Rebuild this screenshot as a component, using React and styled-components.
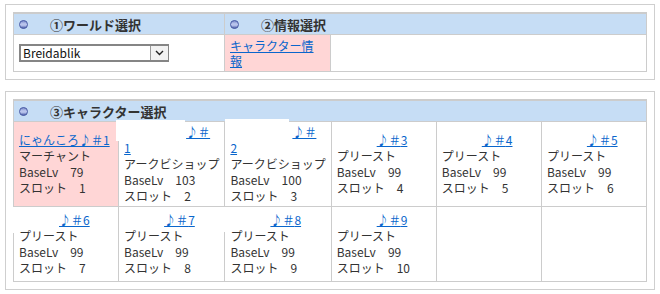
import React from "react";
import styled, { createGlobalStyle } from "styled-components";

const GlobalStyle = createGlobalStyle`
  body {
    margin: 0;
    background: #ffffff;
    font-family: "Noto Sans CJK JP", "Noto Sans", sans-serif;
    font-size: 12px;
    color: #333333;
  }
`;

const characters = [
  { label: "にゃんころ♪＃1", job: "マーチャント", lv: 79, slot: 1, active: true },
  { pad: 62, num: 1, wrap: true, job: "アークビショップ", lv: 103, slot: 2, cover: { l: -3, t: -2, w: 69, h: 21 } },
  { pad: 62, num: 2, wrap: true, job: "アークビショップ", lv: 100, slot: 3, cover: { l: 0, t: -3, w: 64, h: 21 } },
  { pad: 40, num: 3, job: "プリースト", lv: 99, slot: 4 },
  { pad: 40, num: 4, job: "プリースト", lv: 99, slot: 5 },
  { pad: 40, num: 5, job: "プリースト", lv: 99, slot: 6 },
  { pad: 40, num: 6, job: "プリースト", lv: 99, slot: 7, cover: { l: -1, t: 0, w: 2, h: 26 } },
  { pad: 40, num: 7, job: "プリースト", lv: 99, slot: 8 },
  { pad: 40, num: 8, job: "プリースト", lv: 99, slot: 9, cover: { l: -1, t: 0, w: 2, h: 25 } },
  { pad: 40, num: 9, job: "プリースト", lv: 99, slot: 10 },
];

const Bullet = () => (
  <svg width="9" height="9" viewBox="0 0 9 9">
    <defs>
      <linearGradient id="ball" x1="0" y1="0" x2="0" y2="1">
        <stop offset="0" stopColor="#6f80c4" />
        <stop offset="0.4" stopColor="#b9c4ec" />
        <stop offset="0.6" stopColor="#b9c4ec" />
        <stop offset="1" stopColor="#3d4f9e" />
      </linearGradient>
    </defs>
    <circle cx="4.5" cy="4.5" r="4" fill="url(#ball)" stroke="#4a5ca6" strokeWidth="1" />
  </svg>
);

const App = () => (
  <Page>
    <GlobalStyle />
    <Panel>
      <Table>
        <Head $span={2}>
          <Bullet />
          ①ワールド選択
        </Head>
        <Head $span={4}>
          <Bullet />
          ②情報選択
        </Head>
        <WorldCell>
          <SelectBox>
            <Select defaultValue="Breidablik">
              <option>Breidablik</option>
            </Select>
            <DropButton>
              <svg width="9" height="6" viewBox="0 0 9 6">
                <polyline points="1,1 4.5,4.5 8,1" fill="none" stroke="#222" strokeWidth="1.4" />
              </svg>
            </DropButton>
          </SelectBox>
        </WorldCell>
        <InfoCell>
          <Link href="#">キャラクター情報</Link>
        </InfoCell>
        <Blank $span={3} />
      </Table>
    </Panel>

    <Panel>
      <CharTable>
        <Head $span={6}>
          <Bullet />
          ③キャラクター選択
        </Head>
        {characters.map((c) => (
          <CharCell key={c.slot} $active={c.active}>
            {c.cover && <Cover $l={c.cover.l} $t={c.cover.t} $w={c.cover.w} $h={c.cover.h} />}
            <Line>
              {c.label ? (
                <Link href="#">{c.label}</Link>
              ) : (
                <>
                  <Spacer $w={c.pad} />
                  <Link href="#">
                    ♪＃{c.wrap && <br />}
                    {c.num}
                  </Link>
                </>
              )}
            </Line>
            <Line>{c.job}</Line>
            <Line>BaseLv　{c.lv}</Line>
            <Line>スロット　{c.slot}</Line>
          </CharCell>
        ))}
        <Blank $span={1} />
        <Blank $span={1} />
      </CharTable>
    </Panel>
  </Page>
);
export default App;

const Page = styled.div`
  display: flex;
  flex-direction: column;
  gap: 11px;
  padding: 4px 5px 6px 5px;
`;

const Panel = styled.section`
  border: 1px solid #cfcfcf;
  padding: 7px;
`;

const Table = styled.div`
  display: grid;
  grid-template-columns: repeat(6, 1fr);
  gap: 1px;
  background: #cccccc;
  border: 1px solid #cccccc;
  border-top-width: 2px;
`;

const CharTable = styled(Table)`
  grid-template-rows: 20px;
  grid-auto-rows: minmax(74px, auto);
`;

const Head = styled.div`
  grid-column: span ${(p) => p.$span};
  height: 20px;
  display: flex;
  align-items: center;
  gap: 22px;
  padding-left: 5px;
  background: #c6ddf5;
  font-size: 13px;
  font-weight: bold;
  color: #333333;
`;

const WorldCell = styled.div`
  grid-column: span 2;
  height: 36px;
  display: flex;
  align-items: center;
  padding-left: 5px;
  background: #ffffff;
`;

const SelectBox = styled.div`
  width: 150px;
  height: 18px;
  box-sizing: border-box;
  display: flex;
  border: 2px solid #858585;
  border-right-width: 1px;
  background: #ffffff;
`;

const Select = styled.select`
  flex: 1;
  min-width: 0;
  appearance: none;
  border: none;
  outline: none;
  padding: 0 2px;
  background: transparent;
  font-family: "Noto Sans CJK JP", "Noto Sans", sans-serif;
  font-size: 12px;
  line-height: 14px;
  color: #111111;
`;

const DropButton = styled.span`
  width: 17px;
  display: flex;
  align-items: center;
  justify-content: center;
  border-left: 1px solid #9a9a9a;
  background: #f2f2f2;
`;

const InfoCell = styled.div`
  padding: 3px 5px;
  background: #ffd6d6;
  line-height: 15px;
`;

const Blank = styled.div`
  grid-column: span ${(p) => p.$span};
  background: #ffffff;
`;

const CharCell = styled.div`
  position: relative;
  display: flex;
  flex-direction: column;
  justify-content: center;
  padding: 2px 5px;
  background: ${(p) => (p.$active ? "#ffd6d6" : "#ffffff")};
  line-height: 16px;
  white-space: nowrap;
`;

const Line = styled.div`
  color: #333333;
`;

const Spacer = styled.span`
  display: inline-block;
  width: ${(p) => p.$w}px;
`;

const Link = styled.a`
  color: #0a66cc;
  text-decoration: underline;
`;

const Cover = styled.span`
  position: absolute;
  left: ${(p) => p.$l}px;
  top: ${(p) => p.$t}px;
  width: ${(p) => p.$w}px;
  height: ${(p) => p.$h}px;
  background: #ffffff;
`;
